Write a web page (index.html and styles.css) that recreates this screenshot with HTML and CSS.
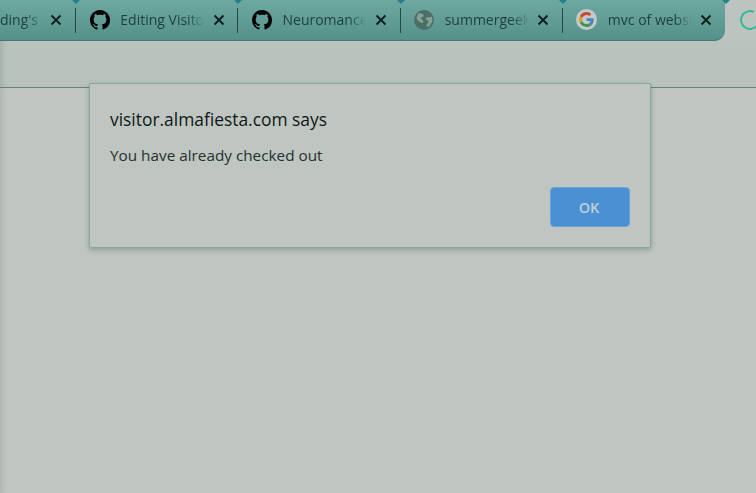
FILE: index.html
```html
<!DOCTYPE html>
<html lang="en">
<head>
<meta charset="utf-8">
<title>visitor.almafiesta.com</title>
<link rel="stylesheet" href="styles.css">
</head>
<body>
<svg class="defs" width="0" height="0" aria-hidden="true">
  <symbol id="gh" viewBox="0 0 16 16"><path fill-rule="evenodd" d="M8 0C3.58 0 0 3.58 0 8c0 3.54 2.29 6.53 5.47 7.59.4.07.55-.17.55-.38 0-.19-.01-.82-.01-1.49-2.01.37-2.53-.49-2.69-.94-.09-.23-.48-.94-.82-1.13-.28-.15-.68-.52-.01-.53.63-.01 1.08.58 1.23.82.72 1.21 1.87.87 2.33.66.07-.52.28-.87.51-1.07-1.78-.2-3.64-.89-3.64-3.95 0-.87.31-1.59.82-2.15-.08-.2-.36-1.02.08-2.12 0 0 .67-.21 2.2.82.64-.18 1.32-.27 2-.27s1.36.09 2 .27c1.53-1.04 2.2-.82 2.2-.82.44 1.1.16 1.92.08 2.12.51.56.82 1.27.82 2.15 0 3.07-1.87 3.75-3.65 3.95.29.25.54.73.54 1.48 0 1.07-.01 1.93-.01 2.2 0 .21.15.46.55.38A8.01 8.01 0 0 0 16 8c0-4.42-3.58-8-8-8z"/></symbol>
  <symbol id="x" viewBox="0 0 12 12"><path d="M1.500 1.500l9 9M10.500 1.500l-9 9" fill="none" stroke="currentColor" stroke-width="2"/></symbol>
</svg>
<div class="browser">
  <div class="chrome-row">
    <div class="tabstrip">
      <div class="tab tab-first">
        <span class="tab-title tab-title-clip">ding's</span>
        <svg class="close"><use href="#x"/></svg>
      </div>
      <div class="tab">
        <svg class="favicon"><use href="#gh"/></svg>
        <span class="tab-title">Editing Visitor</span>
        <svg class="close"><use href="#x"/></svg>
      </div>
      <div class="tab">
        <svg class="favicon"><use href="#gh"/></svg>
        <span class="tab-title">Neuromancer</span>
        <svg class="close"><use href="#x"/></svg>
      </div>
      <div class="tab">
        <svg class="favicon" viewBox="0 0 18 18">
          <circle cx="9" cy="9" r="9" fill="#4a6f66"/>
          <path d="M3.500 3.500c1.800-.8 3.300-.6 4.700.3 1 .7.6 2-.7 2.300-1.300.3-1.500 1.500-.5 2.500l1.200 1.300c.6.800-.1 2-1.200 1.700-2.200-.6-3.800-2.500-4.800-4.500zM16 6l-4.500.8c-1 .2-1.200 1.300-.4 2l2.200 1.700-2.500 4 3 .5 3-5z" fill="#83a198"/>
        </svg>
        <span class="tab-title">summergeek</span>
        <svg class="close"><use href="#x"/></svg>
      </div>
      <div class="tab tab-last">
        <span class="g-badge">
          <svg class="g-logo" viewBox="0 0 48 48">
            <path fill="#c9473b" d="M24 9.500c3.540 0 6.710 1.220 9.210 3.600l6.850-6.850C35.900 2.380 30.470 0 24 0 14.620 0 6.510 5.380 2.560 13.220l7.980 6.190C12.430 13.720 17.740 9.500 24 9.500z"/>
            <path fill="#4683c9" d="M46.980 24.550c0-1.570-.15-3.090-.38-4.550H24v9.020h12.940c-.58 2.960-2.260 5.480-4.780 7.180l7.730 6c4.510-4.180 7.090-10.360 7.090-17.650z"/>
            <path fill="#d1a52f" d="M10.530 28.590c-.48-1.450-.76-2.990-.76-4.590s.27-3.140.76-4.590l-7.980-6.190C.92 16.460 0 20.120 0 24c0 3.880.92 7.540 2.560 10.780l7.970-6.190z"/>
            <path fill="#43935a" d="M24 48c6.480 0 11.930-2.130 15.890-5.810l-7.730-6c-2.150 1.450-4.920 2.300-8.160 2.300-6.260 0-11.570-4.220-13.470-9.910l-7.980 6.190C6.510 42.620 14.620 48 24 48z"/>
          </svg>
        </span>
        <span class="tab-title">mvc of websites</span>
        <svg class="close"><use href="#x"/></svg>
      </div>
    </div>
    <div class="new-tab">
      <span class="spinner"></span>
    </div>
  </div>
  <div class="toolbar"></div>
  <div class="content"></div>
  <div class="dialog">
    <h1 class="dialog-title">visitor.almafiesta.com says</h1>
    <p class="dialog-message">You have already checked out</p>
    <div class="dialog-actions">
      <button class="ok" type="button">OK</button>
    </div>
  </div>
</div>
</body>
</html>
```
FILE: styles.css
```css
* { box-sizing: border-box; }
html, body { margin: 0; height: 100%; }
body {
  background: #bfc5c0;
  font-family: "Open Sans", "Noto Sans", "Liberation Sans", sans-serif;
  overflow: hidden;
}
.defs { position: absolute; }
.browser {
  position: relative;
  width: 756px;
  height: 493px;
  display: flex;
  flex-direction: column;
}
.chrome-row {
  display: flex;
  height: 41px;
  background: #bcc4bf;
}
.tabstrip {
  display: flex;
  width: 725px;
  height: 41px;
  align-items: stretch;
  background: linear-gradient(#6da9a1, #55918a);
  border-bottom: 1px solid #3f7a74;
  border-bottom-right-radius: 11px;
}
.tab {
  position: relative;
  width: 162.600px;
  display: flex;
  align-items: center;
  padding: 0 13.500px 1px 13.500px;
  color: #1d3f3b;
}
.tab::after {
  content: "";
  position: absolute;
  right: 0;
  top: 8px;
  width: 1px;
  height: 25px;
  background: #1f4a46;
}
.tab::before {
  content: "";
  position: absolute;
  right: -4px;
  top: 0;
  border: 4px solid transparent;
  border-top-color: #257f86;
  border-bottom: 0;
}
.tab-first { width: 76.500px; padding-left: 0; }
.tab-last::after { display: none; }
.tab-last::before { right: -5px; }
.favicon { width: 20px; height: 20px; flex: none; color: #0e1f1d; }
.tab-title {
  margin-left: 10.500px;
  width: 84px;
  flex: none;
  font-size: 14px;
  white-space: nowrap;
  overflow: hidden;
  -webkit-mask-image: linear-gradient(to right, #000 80%, transparent 100%);
  mask-image: linear-gradient(to right, #000 80%, transparent 100%);
}
.tab-title-clip {
  margin-left: 0;
  width: 38px;
  -webkit-mask-image: linear-gradient(to right, #000 60%, rgba(0,0,0,.45) 100%);
  mask-image: linear-gradient(to right, #000 60%, rgba(0,0,0,.45) 100%);
}
.close { width: 12px; height: 12px; flex: none; margin-left: auto; color: #10211f; }
.tab-first .close { margin-right: 1px; }
.g-badge {
  width: 21px;
  height: 21px;
  flex: none;
  border-radius: 50%;
  background: #c4cbc6;
  display: flex;
  align-items: center;
  justify-content: center;
}
.g-logo { width: 15px; height: 15px; }
.new-tab {
  flex: 1;
  display: flex;
  align-items: center;
  padding: 0 0 1px 15px;
  overflow: hidden;
}
.spinner {
  flex: none;
  width: 20px;
  height: 20px;
  border-radius: 50%;
  border: 2.700px solid #35b899;
  border-right-color: transparent;
  transform: rotate(-20deg);
}
.toolbar {
  height: 47px;
  background: #b9c2bd;
  border-bottom: 1px solid #66817a;
  box-shadow: inset 7px 0 6px -6px rgba(70, 90, 85, .25);
}
.content {
  flex: 1;
  background: #bfc5c0;
  box-shadow: inset 7px 0 6px -6px rgba(70, 90, 85, .2);
}
.dialog {
  position: absolute;
  left: 89px;
  top: 83px;
  width: 562px;
  height: 165px;
  padding: 23px 20px 20px 20px;
  background: #bfc5c0;
  border: 1px solid #86a898;
  border-radius: 2px;
  box-shadow: 0 2px 5px rgba(70, 100, 90, .4);
  display: flex;
  flex-direction: column;
}
.dialog-title {
  margin: 0;
  font-size: 17.400px;
  font-weight: 400;
  line-height: 24px;
  color: #0f1816;
}
.dialog-message {
  margin: 14px 0 0;
  font-size: 15.300px;
  line-height: 20px;
  color: #263230;
}
.dialog-actions {
  margin-top: auto;
  display: flex;
  justify-content: flex-end;
}
.ok {
  width: 80px;
  height: 40px;
  padding: 0 2px 0 0;
  border: 1px solid #6da5d8;
  border-radius: 4px;
  background: #4a90d2;
  color: #c2cfd6;
  font: 600 14.500px "Open Sans", "Noto Sans", sans-serif;
}
```
